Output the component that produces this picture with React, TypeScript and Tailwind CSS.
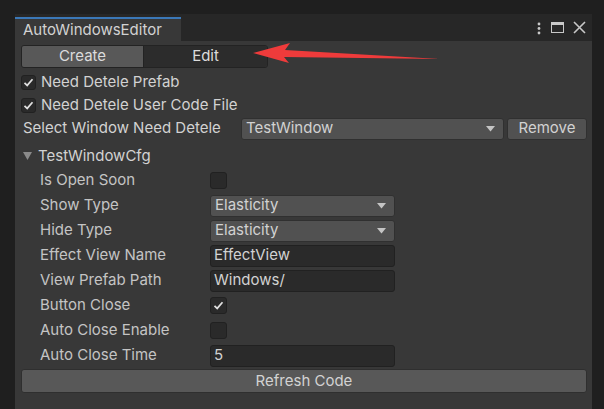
import React from 'react';

const FONT = { fontFamily: 'Inter, "Noto Sans", sans-serif' };

function Check({ on, size = 'w-[15px] h-[15px]' }: { on?: boolean; size?: string }) {
  return (
    <div className={`${size} rounded-[3px] bg-[#2a2a2a] border border-[#212121] flex items-center justify-center shrink-0`}>
      {on && (
        <svg width="11" height="11" viewBox="0 0 11 11">
          <path d="M1.5 5.8 L4.2 8.4 L9.5 2.2" fill="none" stroke="#e0e0e0" strokeWidth="1.7" />
        </svg>
      )}
    </div>
  );
}

function Arrow() {
  return (
    <svg width="9" height="6" viewBox="0 0 9 6" className="shrink-0">
      <path d="M0 0 L9 0 L4.5 5.5 Z" fill="#c4c4c4" />
    </svg>
  );
}

function Dropdown({ value, w }: { value: string; w: string }) {
  return (
    <div className={`${w} h-[22px] rounded-[3px] bg-[#515151] border border-[#303030] flex items-center pl-[4px] pr-[8px] justify-between text-[#d2d2d2]`}>
      <span>{value}</span>
      <Arrow />
    </div>
  );
}

function TextBox({ value }: { value: string }) {
  return (
    <div className="w-[185px] h-[22px] rounded-[3px] bg-[#2a2a2a] border border-[#212121] flex items-center pl-[3px] text-[#d2d2d2]">
      {value}
    </div>
  );
}

const rows: { label: string; kind: 'check' | 'drop' | 'text'; value?: string; on?: boolean }[] = [
  { label: 'Is Open Soon', kind: 'check' },
  { label: 'Show Type', kind: 'drop', value: 'Elasticity' },
  { label: 'Hide Type', kind: 'drop', value: 'Elasticity' },
  { label: 'Effect View Name', kind: 'text', value: 'EffectView' },
  { label: 'View Prefab Path', kind: 'text', value: 'Windows/' },
  { label: 'Button Close', kind: 'check', on: true },
  { label: 'Auto Close Enable', kind: 'check' },
  { label: 'Auto Close Time', kind: 'text', value: '5' },
];

export default function App() {
  return (
    <div className="w-[604px] h-[409px] bg-[#1f1f1f] relative overflow-hidden pt-[14px] pl-[15px] text-[15px] text-[#c4c4c4]" style={FONT}>
      <div className="w-[577px] h-[395px] bg-[#383838] flex flex-col">
        {/* title bar */}
        <div className="h-[27px] bg-[#272727] flex items-end">
          <div className="w-[166px] h-[24px] bg-[#383838] border-t-2 border-[#3b78b8] flex items-center pl-[8px] text-[#d2d2d2]">
            AutoWindowsEditor
          </div>
          <div className="flex-1 h-full flex items-center justify-end gap-[9px] pr-[6px]">
            <svg width="6" height="14" viewBox="0 0 6 14">
              <circle cx="3" cy="3" r="1.4" fill="#c8c8c8" />
              <circle cx="3" cy="7.5" r="1.4" fill="#c8c8c8" />
              <circle cx="3" cy="12" r="1.4" fill="#c8c8c8" />
            </svg>
            <svg width="13" height="11" viewBox="0 0 13 11">
              <rect x="0.5" y="0.5" width="12" height="10" fill="none" stroke="#c8c8c8" strokeWidth="1" />
              <rect x="0.5" y="0.5" width="12" height="2.5" fill="#c8c8c8" />
            </svg>
            <svg width="13" height="13" viewBox="0 0 13 13">
              <path d="M1 1 L12 12 M12 1 L1 12" stroke="#c8c8c8" strokeWidth="1.6" />
            </svg>
          </div>
        </div>

        {/* content */}
        <div className="pl-[6px] pr-[5px] flex flex-col">
          <div className="mt-[4px] h-[23px] flex w-[247px] rounded-[3px] overflow-hidden border border-[#232323]">
            <div className="w-[121px] bg-[#585858] flex items-center justify-center text-[#dcdcdc]">Create</div>
            <div className="flex-1 bg-[#2c2c2c] flex items-center justify-center text-[#dcdcdc] border-l border-[#232323]">Edit</div>
          </div>

          <div className="mt-[3px] h-[23px] flex items-center gap-[5px]">
            <Check on />
            <span className="text-[#d2d2d2]">Need Detele Prefab</span>
          </div>
          <div className="h-[23px] flex items-center gap-[5px]">
            <Check on />
            <span className="text-[#d2d2d2]">Need Detele User Code File</span>
          </div>
          <div className="h-[23px] flex items-center">
            <span className="w-[220px] pl-[2px] text-[#d2d2d2]">Select Window Need Detele</span>
            <Dropdown value="TestWindow" w="w-[263px]" />
            <div className="ml-[3px] w-[80px] h-[22px] rounded-[3px] bg-[#515151] border border-[#303030] flex items-center justify-center text-[#d2d2d2]">
              Remove
            </div>
          </div>

          <div className="mt-[5px] h-[22px] flex items-center gap-[6px] pl-[2px]">
            <svg width="9" height="8" viewBox="0 0 9 8">
              <path d="M0 0 L9 0 L4.5 8 Z" fill="#8a8a8a" />
            </svg>
            <span className="text-[#d2d2d2]">TestWindowCfg</span>
          </div>

          <div className="mt-[1px] flex flex-col">
            {rows.map(r => (
              <div key={r.label} className="h-[25px] flex items-center">
                <span className="w-[189px] pl-[19px]">{r.label}</span>
                {r.kind === 'check' && <Check on={r.on} size="w-[17px] h-[17px]" />}
                {r.kind === 'drop' && <Dropdown value={r.value!} w="w-[185px]" />}
                {r.kind === 'text' && <TextBox value={r.value!} />}
              </div>
            ))}
          </div>

          <div className="mt-[1px] h-[24px] rounded-[3px] bg-[#585858] border border-[#2f2f2f] flex items-center justify-center text-[#d2d2d2]">
            Refresh Code
          </div>
        </div>
      </div>

      {/* annotation arrow */}
      <svg className="absolute left-0 top-0 pointer-events-none" width="604" height="409">
        <polygon points="253,53 290,43 285,50 440,59 284,57 289,63" fill="#ef3b3b" />
      </svg>
    </div>
  );
}
